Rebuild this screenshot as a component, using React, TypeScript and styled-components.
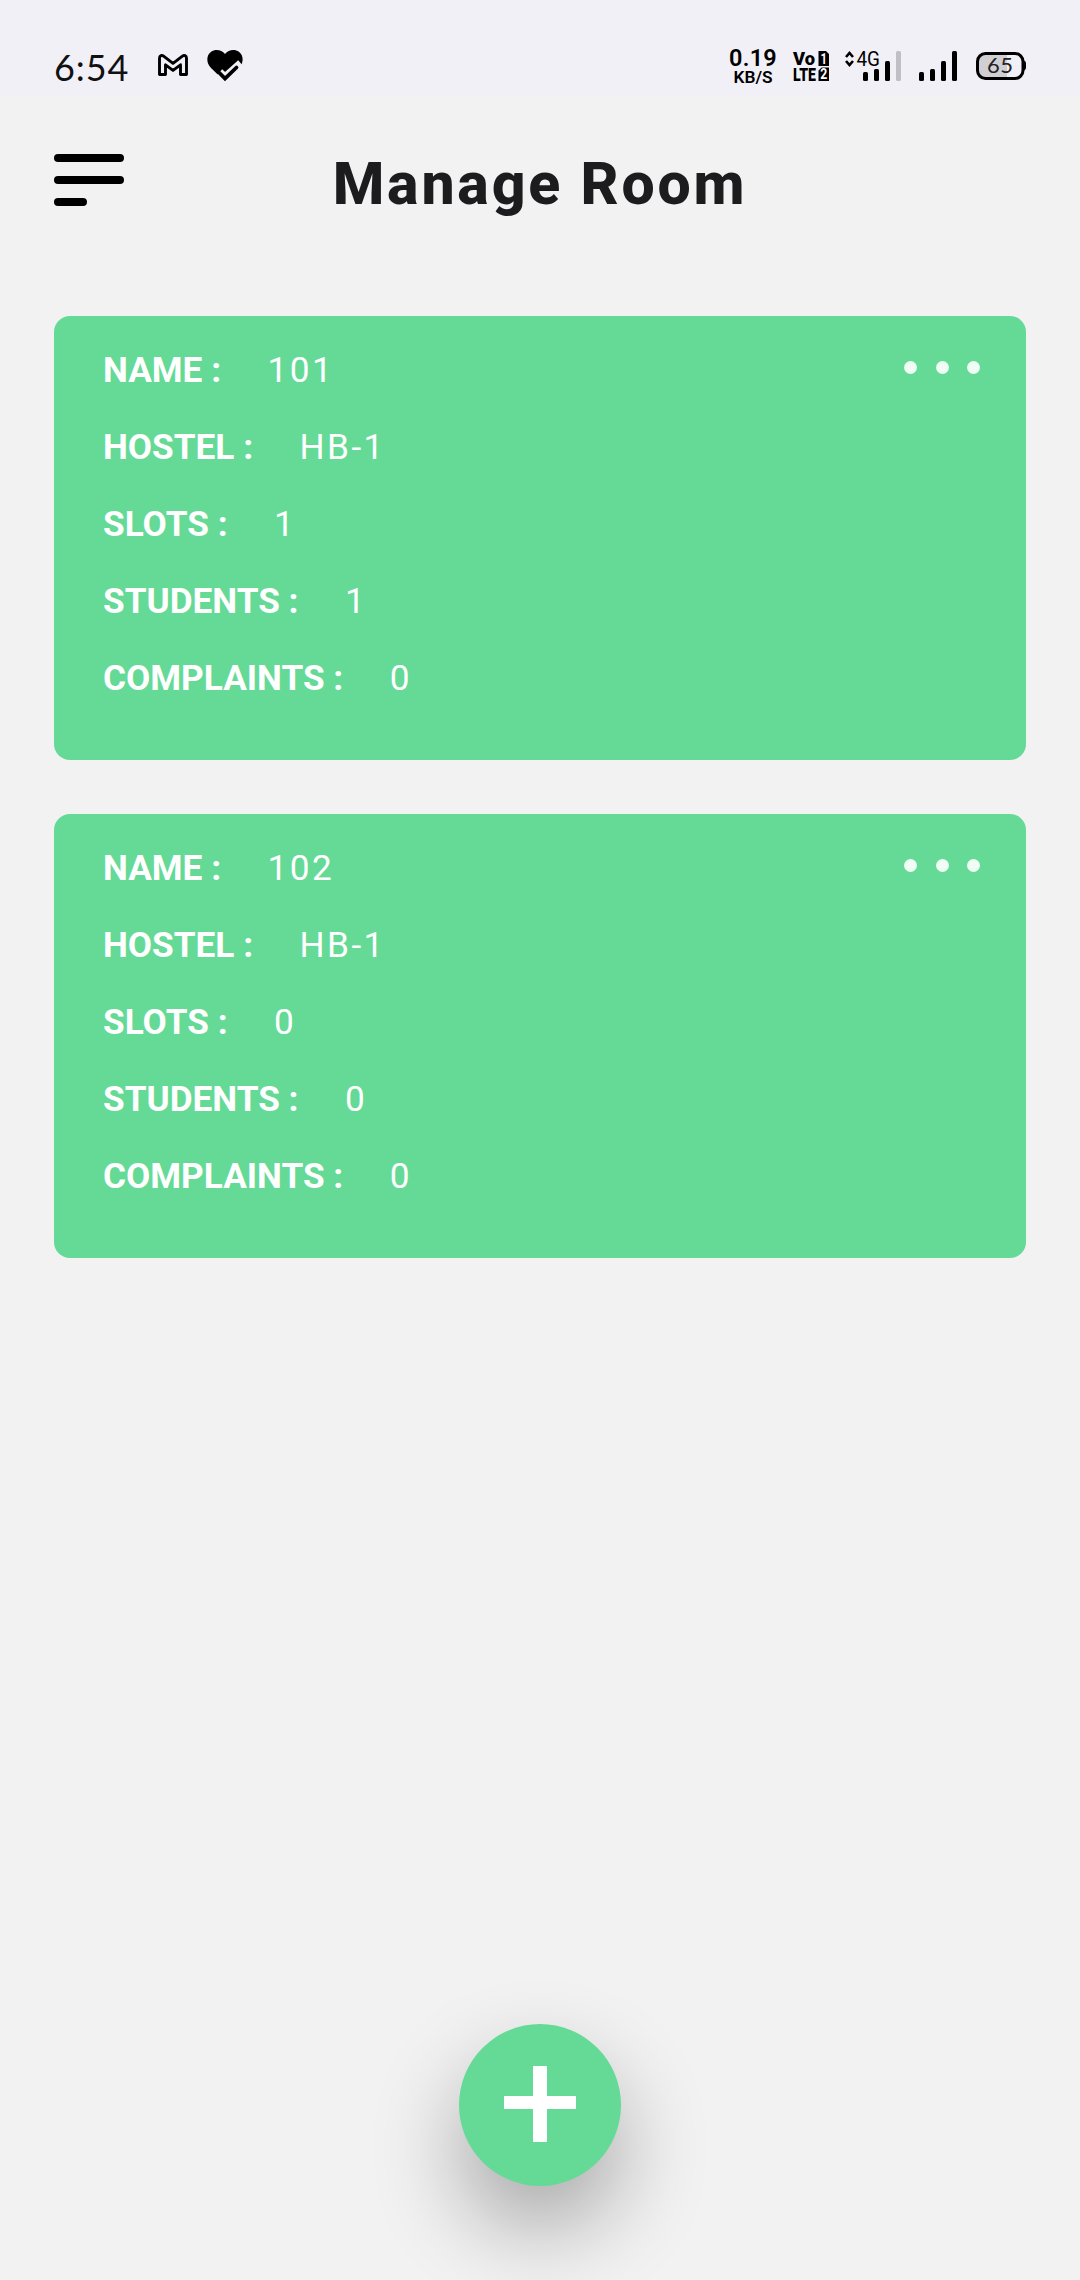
import React from "react";
import styled, { createGlobalStyle } from "styled-components";

const GlobalStyle = createGlobalStyle`
  * { box-sizing: border-box; }
  body { margin: 0; background: #f2f2f2; }
`;

const Screen = styled.div`
  display: flex;
  flex-direction: column;
  width: 1080px;
  height: 2280px;
  overflow: hidden;
  background: #f2f2f2;
  font-family: Roboto, sans-serif;
`;

const StatusBar = styled.header`
  display: flex;
  justify-content: space-between;
  height: 97px;
  padding: 45px 54px 0 54px;
  background: #f1f0f7;
`;

const StatusGroup = styled.div`
  display: flex;
  align-items: flex-start;
`;

const Clock = styled.time`
  width: 104px;
  font: 400 36px/44px Lato, sans-serif;
  letter-spacing: 0.9px;
  color: #111;
`;

const StatusIcon = styled.svg<{ $gap?: number }>`
  display: block;
  flex: none;
  margin-left: ${(p) => p.$gap ?? 0}px;
  overflow: visible;
`;

const IconSlot = styled.div<{ $top: number }>`
  padding-top: ${(p) => p.$top}px;
`;

const NetSpeed = styled.div`
  display: flex;
  flex-direction: column;
  align-items: center;
  width: 50px;
  color: #000;
  font-weight: 600;
`;

const SpeedValue = styled.span`
  font-size: 23.5px;
  line-height: 26px;
  letter-spacing: 0.3px;
`;

const SpeedUnit = styled.span`
  font-size: 17.300px;
  line-height: 12px;
`;

const TitleBar = styled.div`
  display: grid;
  grid-template-columns: 70px 1fr 70px;
  height: 219px;
  padding: 57px 54px 0;
`;

const MenuButton = styled.button`
  display: flex;
  flex-direction: column;
  gap: 14px;
  height: 53px;
  padding: 0;
  border: 0;
  background: none;
`;

const MenuLine = styled.span<{ $width: number }>`
  width: ${(p) => p.$width}px;
  height: 8px;
  border-radius: 4px;
  background: #000;
`;

const Title = styled.h1`
  margin: -5px 0 0;
  text-align: center;
  font-size: 59px;
  line-height: 70px;
  font-weight: 800;
  letter-spacing: 2.8px;
  color: #1c1c1e;
`;

const RoomList = styled.main`
  display: flex;
  flex: 1;
  flex-direction: column;
  gap: 54.500px;
  padding: 0 54px;
`;

const Card = styled.article`
  display: flex;
  justify-content: space-between;
  align-items: flex-start;
  height: 443.500px;
  padding: 16px 46px 0 49px;
  border-radius: 16px;
  background: #64da96;
  color: #fff;
`;

const Fields = styled.dl`
  margin: 0;
`;

const Field = styled.div`
  display: flex;
  height: 77px;
  line-height: 77px;
  font-size: 35.200px;
`;

const Label = styled.dt`
  font-weight: 700;
`;

const Value = styled.dd`
  margin: 0 0 0 46.500px;
  letter-spacing: 2.400px;
`;

const MoreButton = styled.button`
  display: flex;
  gap: 18.500px;
  margin-top: 29px;
  padding: 0;
  border: 0;
  background: none;
`;

const Dot = styled.span`
  width: 13px;
  height: 13px;
  border-radius: 50%;
  background: #effdf4;
`;

const Footer = styled.footer`
  display: flex;
  justify-content: center;
  height: 256px;
`;

const AddButton = styled.button`
  display: flex;
  justify-content: center;
  width: 162px;
  height: 162px;
  padding: 42px 0 0;
  border: 0;
  border-radius: 50%;
  background: #64da96;
  box-shadow: 0 42px 88px rgba(0, 0, 0, 0.31);
`;

type Room = { name: string; hostel: string; slots: number; students: number; complaints: number };

const rooms: Room[] = [
  { name: "101", hostel: "HB-1", slots: 1, students: 1, complaints: 0 },
  { name: "102", hostel: "HB-1", slots: 0, students: 0, complaints: 0 },
];

const fields: (keyof Room)[] = ["name", "hostel", "slots", "students", "complaints"];

const MailIcon = () => (
  <StatusIcon width="30" height="22" viewBox="0 0 30 22">
    <path
      d="M1.500 20.500V4.200C1.500 1.500 3.800.8 5.600 2.200L15 9.300l9.400-7.100c1.800-1.400 4.100-.7 4.100 2v16.300h-6V10.800L15 16.400 7.500 10.800V20.500Z"
      fill="none"
      stroke="#000"
      strokeWidth="2.900"
      strokeLinejoin="round"
    />
  </StatusIcon>
);

const HeartIcon = () => (
  <StatusIcon width="36" height="32" viewBox="0 0 36 32" $gap={19}>
    <path d="M18 31.500 4 18C-2 12-.5 2 7.500.3 11.500-.5 15.500 1 18 4 20.500 1 24.500-.5 28.500.3 36.500 2 38 12 32 18Z" fill="#000" />
    <path d="m12.300 22.500 5.700 5.200L34 13.500" fill="none" stroke="#f1f0f7" strokeWidth="8.500" />
    <path d="m12.500 23 5.500 5.600L29.500 17.500" fill="none" stroke="#000" strokeWidth="3.800" strokeLinecap="round" />
  </StatusIcon>
);

const VolteIcon = () => (
  <StatusIcon width="37" height="30" viewBox="0 0 37 30" $gap={16}>
    <g fontFamily="Roboto, sans-serif" fontWeight="900">
      <text x="-1" y="14" fontSize="19" textLength="22" lengthAdjust="spacingAndGlyphs">Vo</text>
      <text x="-1" y="30" fontSize="19" textLength="23" lengthAdjust="spacingAndGlyphs">LTE</text>
      <path d="M24.500 0H32l3 3v12H24.500zM27.500 16.500H35V30H24.500V19.500z" />
      <text x="26.500" y="12.500" fontSize="14" fontWeight="700" fill="#fff" textLength="6.500" lengthAdjust="spacingAndGlyphs">1</text>
      <text x="26.200" y="28.200" fontSize="14" fontWeight="700" fill="#fff" textLength="7" lengthAdjust="spacingAndGlyphs">2</text>
    </g>
  </StatusIcon>
);

const signalBars = [
  { x: 0, h: 9 },
  { x: 11, h: 12 },
  { x: 22, h: 20 },
  { x: 33, h: 30 },
];

const Bars = ({ x = 0, dim = false }: { x?: number; dim?: boolean }) => (
  <>
    {signalBars.map((b, i) => (
      <rect key={b.x} x={x + b.x} y={30 - b.h} width="5" height={b.h} rx="1.500" fill={dim && i === 3 ? "#c0bfc5" : "#000"} />
    ))}
  </>
);

const DataSignalIcon = () => (
  <StatusIcon width="56" height="30" viewBox="0 0 56 30" $gap={14}>
    <path d="m1 6 3.500-4L8 6M1 10l3.500 4L8 10" fill="none" stroke="#000" strokeWidth="2.600" />
    <text x="11.500" y="15" fontSize="19.500" fontFamily="Roboto, sans-serif" textLength="23.500" lengthAdjust="spacingAndGlyphs">4G</text>
    <Bars x={18} dim />
  </StatusIcon>
);

const SignalIcon = () => (
  <StatusIcon width="38" height="30" viewBox="0 0 38 30" $gap={18}>
    <Bars />
  </StatusIcon>
);

const BatteryIcon = () => (
  <StatusIcon width="50" height="28" viewBox="0 0 50 28" $gap={19}>
    <path d="M9 1.500h22v25H9a7.500 7.500 0 0 1-7.500-7.500V9A7.500 7.500 0 0 1 9 1.500Z" fill="#d0cfd4" />
    <rect x="1.500" y="1.500" width="45.500" height="25" rx="8" fill="none" stroke="#000" strokeWidth="3" />
    <path d="M47 8q3 1 3 3v5q0 2-3 3z" />
    <text x="11" y="21" fontSize="22" fontFamily="Lato, sans-serif" textLength="26" fill="#222">65</text>
  </StatusIcon>
);

const RoomCard = ({ room }: { room: Room }) => (
  <Card>
    <Fields>
      {fields.map((f) => (
        <Field key={f}>
          <Label>{f.toUpperCase()} :</Label>
          <Value>{room[f]}</Value>
        </Field>
      ))}
    </Fields>
    <MoreButton aria-label="Room options">
      <Dot />
      <Dot />
      <Dot />
    </MoreButton>
  </Card>
);

export default function App() {
  return (
    <Screen>
      <GlobalStyle />
      <StatusBar>
        <StatusGroup>
          <Clock>6:54</Clock>
          <IconSlot $top={9}><MailIcon /></IconSlot>
          <IconSlot $top={5}><HeartIcon /></IconSlot>
        </StatusGroup>
        <StatusGroup>
          <NetSpeed>
            <SpeedValue>0.19</SpeedValue>
            <SpeedUnit>KB/S</SpeedUnit>
          </NetSpeed>
          <IconSlot $top={6}><VolteIcon /></IconSlot>
          <IconSlot $top={6}><DataSignalIcon /></IconSlot>
          <IconSlot $top={6}><SignalIcon /></IconSlot>
          <IconSlot $top={7}><BatteryIcon /></IconSlot>
        </StatusGroup>
      </StatusBar>
      <TitleBar>
        <MenuButton aria-label="Menu">
          <MenuLine $width={70} />
          <MenuLine $width={70} />
          <MenuLine $width={33} />
        </MenuButton>
        <Title>Manage Room</Title>
      </TitleBar>
      <RoomList>
        {rooms.map((r) => (
          <RoomCard key={r.name} room={r} />
        ))}
      </RoomList>
      <Footer>
        <AddButton aria-label="Add room">
          <svg width="72" height="76" viewBox="0 0 72 76">
            <path d="M29 0h14v30h29v13H43v33H29V43H0V30h29z" fill="#fff" />
          </svg>
        </AddButton>
      </Footer>
    </Screen>
  );
}
